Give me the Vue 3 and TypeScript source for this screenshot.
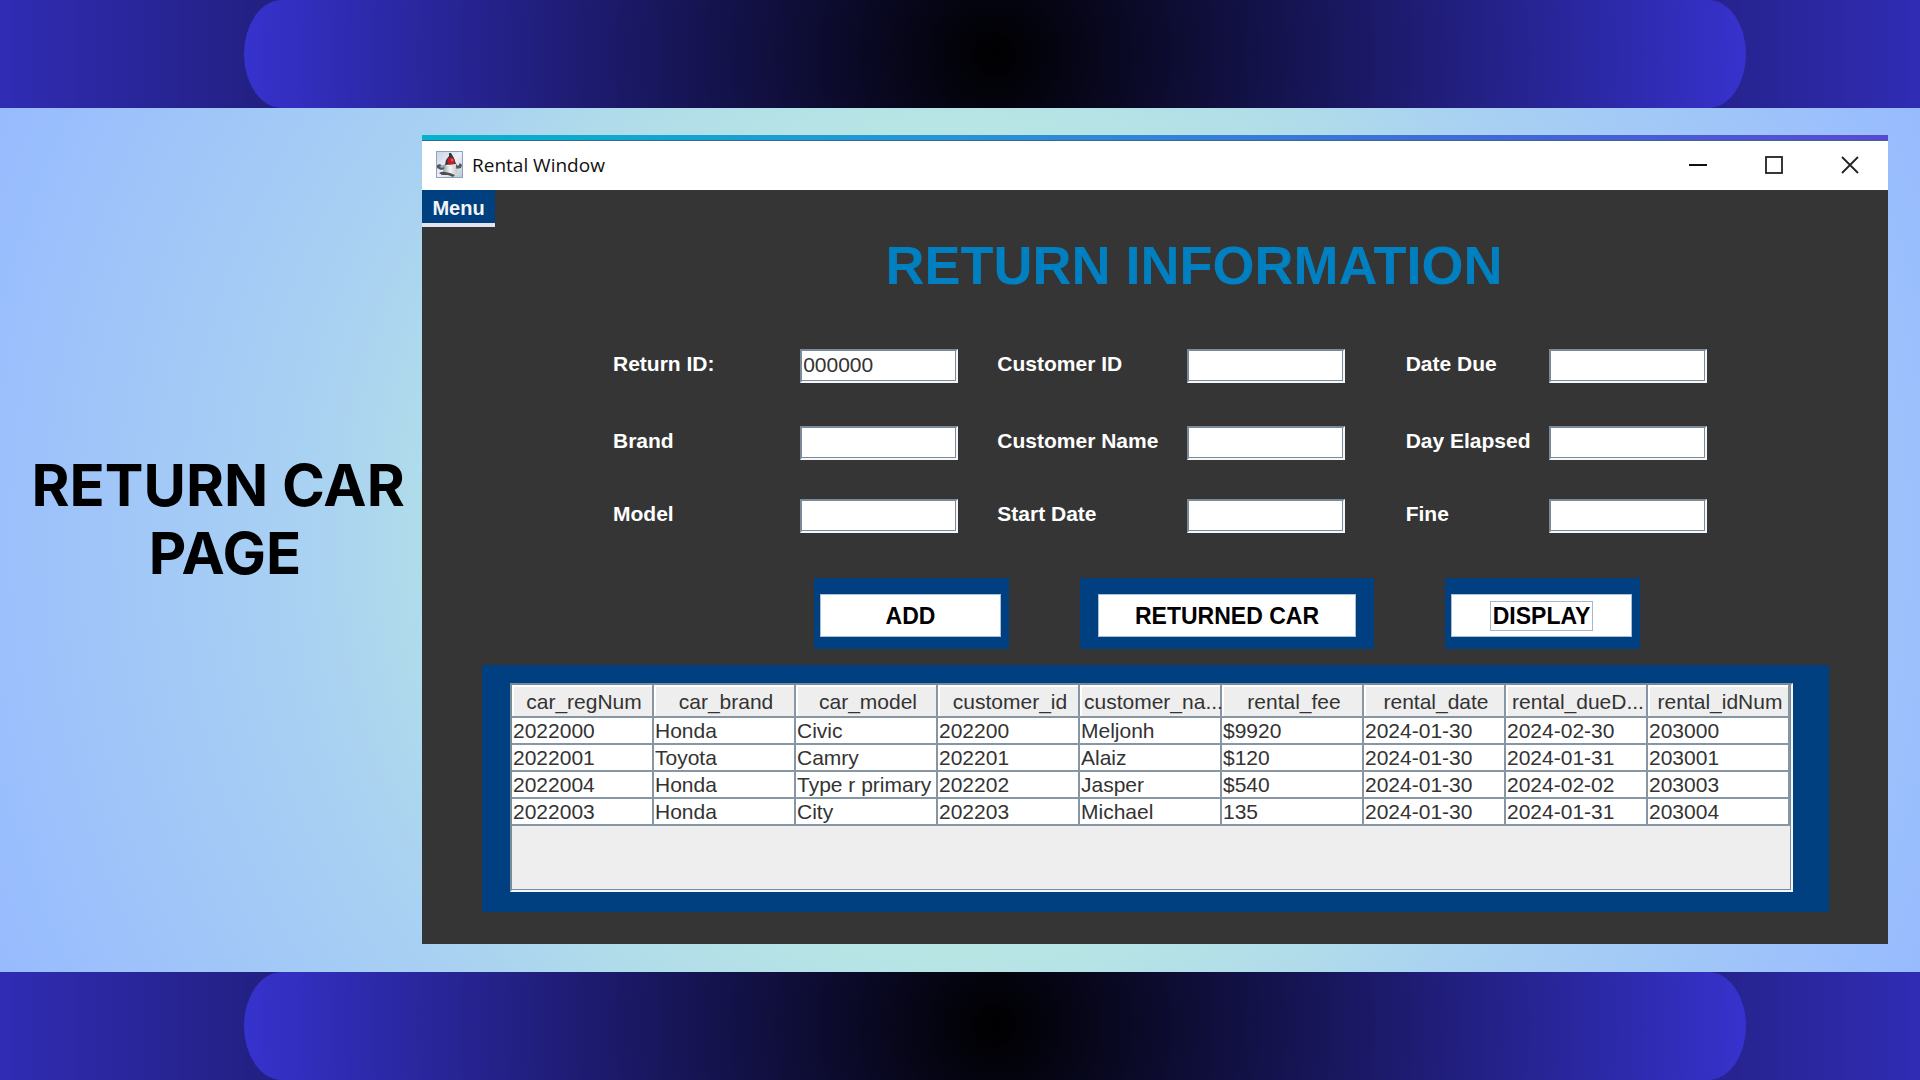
<script setup lang="ts">
import { ref } from 'vue'

interface Field {
  id: string
  label: string
  value: string
}

const fields = ref<Field[]>([
  { id: 'return-id', label: 'Return ID:', value: '000000' },
  { id: 'customer-id', label: 'Customer ID', value: '' },
  { id: 'date-due', label: 'Date Due', value: '' },
  { id: 'brand', label: 'Brand', value: '' },
  { id: 'customer-name', label: 'Customer Name', value: '' },
  { id: 'day-elapsed', label: 'Day Elapsed', value: '' },
  { id: 'model', label: 'Model', value: '' },
  { id: 'start-date', label: 'Start Date', value: '' },
  { id: 'fine', label: 'Fine', value: '' },
])

const columns: string[] = [
  'car_regNum', 'car_brand', 'car_model', 'customer_id', 'customer_na...',
  'rental_fee', 'rental_date', 'rental_dueD...', 'rental_idNum',
]

const rows: string[][] = [
  ['2022000', 'Honda', 'Civic', '202200', 'Meljonh', '$9920', '2024-01-30', '2024-02-30', '203000'],
  ['2022001', 'Toyota', 'Camry', '202201', 'Alaiz', '$120', '2024-01-30', '2024-01-31', '203001'],
  ['2022004', 'Honda', 'Type r primary', '202202', 'Jasper', '$540', '2024-01-30', '2024-02-02', '203003'],
  ['2022003', 'Honda', 'City', '202203', 'Michael', '135', '2024-01-30', '2024-01-31', '203004'],
]

const caption = 'RETURN CAR \nPAGE'
</script>

<template>
  <div class="slide">
    <div class="band"><div class="pill"></div></div>

    <main class="stage">
      <h1 class="caption">{{ caption }}</h1>

      <section class="window">
        <header class="titlebar">
          <svg class="duke" width="27" height="27" viewBox="0 0 27 27" aria-hidden="true">
            <defs>
              <linearGradient id="tile" x1="0" y1="0" x2="1" y2="1">
                <stop offset="0" stop-color="#c9d3e2" />
                <stop offset="0.5" stop-color="#eef0f7" />
                <stop offset="1" stop-color="#b9c6d6" />
              </linearGradient>
              <linearGradient id="belly" x1="0" y1="0" x2="1" y2="0">
                <stop offset="0" stop-color="#9b9fa2" />
                <stop offset="0.5" stop-color="#f4f4f4" />
                <stop offset="1" stop-color="#c4c6c8" />
              </linearGradient>
            </defs>
            <rect x="0.5" y="0.5" width="26" height="26" fill="url(#tile)" stroke="#8fa3ba" />
            <path d="M13 2 L15 2 L18 7 L20 13 L9 14 L10 9 L13 5 Z" fill="#35383b" />
            <path d="M1 14 L4 13 L6 15 L10 13 L10 18 L5 19 L1 17 Z" fill="#55595c" />
            <path d="M4 15 L9 14 L9 16 L5 17 Z" fill="#8db2c4" />
            <path d="M20 13 L22 15 L24 12 L26 14 L25 17 L20 18 Z" fill="#56595c" />
            <path d="M9 14 Q14 17 19 13 L21 19 Q22 23 18 24 L8 23 Q6 21 8 18 Z" fill="url(#belly)" />
            <path d="M3 22 Q6 20 9 21 L14 22 L19 24 L17 26 L12 24 L6 24 Z" fill="#4d5053" />
            <circle cx="15" cy="10" r="3.6" fill="#c81e24" />
            <circle cx="16" cy="9" r="1.2" fill="#f0575a" />
          </svg>
          <span class="window-name">Rental Window</span>
          <div class="controls">
            <button type="button" aria-label="Minimize">
              <svg width="18" height="18" viewBox="0 0 18 18"><path d="M0 9 H18" stroke="#111" stroke-width="2" /></svg>
            </button>
            <button type="button" aria-label="Maximize">
              <svg width="18" height="18" viewBox="0 0 18 18"><rect x="1" y="1" width="16" height="16" fill="none" stroke="#222" stroke-width="1.8" /></svg>
            </button>
            <button type="button" aria-label="Close">
              <svg width="18" height="18" viewBox="0 0 18 18"><path d="M1 1 L17 17 M17 1 L1 17" stroke="#222" stroke-width="1.8" /></svg>
            </button>
          </div>
        </header>

        <div class="content">
          <button type="button" class="menu">Menu</button>
          <h2 class="title">RETURN INFORMATION</h2>

          <form class="form" @submit.prevent>
            <template v-for="field in fields" :key="field.id">
              <label :for="field.id">{{ field.label }}</label>
              <input :id="field.id" v-model="field.value" type="text" autocomplete="off" />
            </template>
          </form>

          <div class="actions">
            <div class="plate"><button type="button">ADD</button></div>
            <div class="plate wide"><button type="button">RETURNED CAR</button></div>
            <div class="plate"><button type="button"><span class="focus">DISPLAY</span></button></div>
          </div>

          <div class="table-plate">
            <div class="scroll">
              <table>
                <thead>
                  <tr>
                    <th v-for="column in columns" :key="column" scope="col">{{ column }}</th>
                  </tr>
                </thead>
                <tbody>
                  <tr v-for="row in rows" :key="row[0]">
                    <td v-for="(cell, i) in row" :key="i">{{ cell }}</td>
                  </tr>
                </tbody>
              </table>
            </div>
          </div>
        </div>
      </section>
    </main>

    <div class="band"><div class="pill"></div></div>
  </div>
</template>

<style>
body {
  margin: 0;
}
</style>

<style scoped>
* {
  box-sizing: border-box;
}

.slide {
  display: flex;
  flex-direction: column;
  min-height: 100vh;
  font-family: "Liberation Sans", Arial, sans-serif;
}

.band {
  flex: none;
  height: 108px;
  padding: 0 174px 0 244px;
  background: linear-gradient(90deg, #302cb4 0, #000 50%, #302cb4 100%);
}

.pill {
  height: 100%;
  border-radius: 38px / 54px;
  background: radial-gradient(circle, #000 0, #3632cd 750px);
}

.stage {
  flex: 1;
  display: flex;
  align-items: flex-start;
  padding: 27px 32px 28px 0;
  background: radial-gradient(circle, #bdebe1 0, #b8e6e4 400px, #b0dcea 540px, #aad2f1 640px, #9bc0fc 960px, #97bbfe 1050px);
}

.caption {
  flex: none;
  width: 422px;
  margin: 0;
  padding: 316px 0 0 28px;
  font: 700 58px/68px Inter, sans-serif;
  text-align: center;
  white-space: pre;
  color: #000;
}

.window {
  flex: 1;
  min-width: 0;
  border-top: 5px solid;
  border-image: linear-gradient(90deg, #00b4cc, #2a8fd8 40%, #4560d8 80%, #5a48d0) 1;
  background: #353535;
}

.titlebar {
  display: flex;
  align-items: center;
  height: 50px;
  padding: 0 0 2px 14px;
  border-top: 1px solid #3c6a8c;
  background: #fff;
}

.window-name {
  margin-left: 9px;
  font: 19px/24px "Open Sans", "Noto Sans", sans-serif;
  color: #111;
}

.controls {
  display: flex;
  margin-left: auto;
}

.controls button {
  display: flex;
  align-items: center;
  justify-content: center;
  width: 76px;
  height: 46px;
  padding: 0;
  border: 0;
  background: none;
}

.content {
  display: flex;
  flex-direction: column;
}

.menu {
  align-self: flex-start;
  width: 73px;
  height: 37px;
  padding: 2px 0 0;
  border: 0;
  border-bottom: 4px solid #e4e4ec;
  background: #004080;
  font: 700 20px/30px "Liberation Sans", Arial, sans-serif;
  color: #f4f4f4;
}

.title {
  margin: 7px 0 0 78px;
  font-size: 54px;
  line-height: 62px;
  text-align: center;
  color: #0080c0;
}

.form {
  display: grid;
  grid-template-columns: 187fr 158fr 228fr 158fr 204fr 158fr;
  grid-template-rows: 77px 73px 34px;
  align-items: start;
  margin: 53px 181px 0 191px;
}

.form label {
  font-size: 21px;
  font-weight: 700;
  line-height: 30px;
  white-space: nowrap;
  color: #fff;
}

.form label:nth-of-type(3n + 2) {
  padding-left: 39px;
}

.form label:nth-of-type(3n) {
  padding-left: 61px;
}

.form input {
  width: 100%;
  height: 34px;
  padding: 0 1px 2px;
  border: 2px solid #7a8a99;
  border-right-color: #f4f6f8;
  border-bottom-color: #f4f6f8;
  box-shadow: inset -1px -1px #7a8a99;
  background: #fff;
  font: 21px/28px "Liberation Sans", Arial, sans-serif;
  color: #333;
  outline: none;
}

.actions {
  display: flex;
  justify-content: center;
  gap: 71px;
  margin: 45px 0 0 144px;
}

.plate {
  width: 195px;
  padding: 16px 8px 12px 6px;
  background: #004080;
}

.plate.wide {
  width: 294px;
  padding: 16px 18px 12px;
}

.plate button {
  display: flex;
  align-items: center;
  justify-content: center;
  width: 100%;
  height: 43px;
  padding: 0;
  border: 1px solid #a9c0d6;
  background: #fff;
  font: 700 23px/28px "Liberation Sans", Arial, sans-serif;
  white-space: nowrap;
  color: #000;
}

.focus {
  padding: 0 2px;
  border: 1px solid #a3b8cc;
}

.table-plate {
  margin: 16px 59px 32px 60px;
  padding: 18px 36px 20px 28px;
  background: #004080;
}

.scroll {
  height: 209px;
  padding-right: 1px;
  border: 2px solid #7a8a99;
  border-right-color: #f4f6f8;
  border-bottom-color: #f4f6f8;
  box-shadow: inset -1px -1px #7a8a99;
  background: #eee;
}

table {
  width: 100%;
  table-layout: fixed;
  border-collapse: separate;
  border-spacing: 0;
}

th,
td {
  height: 27px;
  padding: 0;
  border-right: 2px solid #8796a4;
  border-bottom: 2px solid #8796a4;
  font-size: 21px;
  font-weight: 400;
  line-height: 25px;
  white-space: nowrap;
  color: #333;
}

th {
  height: 33px;
  padding: 2px 0 0 4px;
  background: #eee;
  box-shadow: inset 2px 2px #fff;
  text-align: center;
}

td {
  padding-left: 1px;
  background: #fff;
}
</style>
